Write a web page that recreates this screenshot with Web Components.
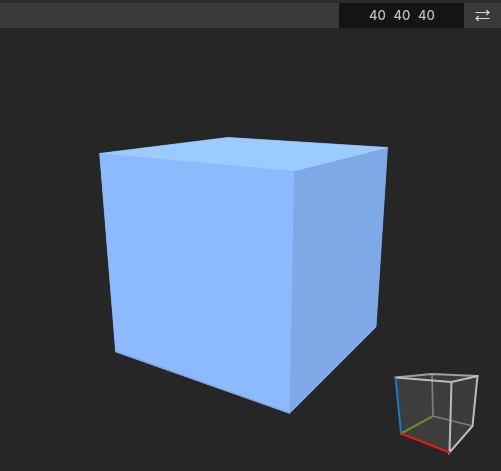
<!DOCTYPE html>
<html><head><meta charset="utf-8"><style>html,body{margin:0;padding:0;background:#262626;height:100%;overflow:hidden}</style></head>
<body>
<viewer-app>
  <view-toolbar slot="bar"><span>40</span><span>40</span><span>40</span></view-toolbar>
  <cube-scene></cube-scene>
  <axis-gizmo slot="overlay"></axis-gizmo>
</viewer-app>
<script>
function def(name, html){
  customElements.define(name, class extends HTMLElement{
    constructor(){super();this.attachShadow({mode:'open'}).innerHTML=html;}
  });
}
def('viewer-app',`<style>
:host{display:flex;flex-direction:column;width:501px;height:471px;background:#262626;position:relative;overflow:hidden;font-family:Inter,"Liberation Sans",sans-serif}
.top{height:3px;background:#2c2c2c;flex:none}
.canvas{flex:1;min-height:0;position:relative}
::slotted([slot=overlay]){position:absolute;left:0;top:0}
</style><div class="top"></div><slot name="bar"></slot><div class="canvas"><slot></slot></div><slot name="overlay"></slot>`);
def('view-toolbar',`<style>
:host{display:flex;height:25px;flex:none;background:#3a3a3a;align-items:stretch}
.fill{flex:1}
.dims{width:125px;background:#141414;display:flex;align-items:center;justify-content:center;box-sizing:border-box}
.vals{display:flex;gap:7.5px;color:#bdbdbd;font:500 13px/25px Inter,"Liberation Sans",sans-serif;will-change:transform}
.btn{width:37px;display:flex;align-items:center;justify-content:center}
svg{display:block}
</style><div class="fill"></div><div class="dims"><div class="vals"><slot></slot></div></div><div class="btn">
<svg width="15" height="11" viewBox="0 0 15 11" fill="none" stroke="#d4d4d4" stroke-width="1.2"><path d="M0.5 2.5H14M11.3 0L14 2.5L11.3 5"/><path d="M14.5 8.5H1M3.7 6L1 8.5L3.7 11"/></svg></div>`);
def('cube-scene',`<style>:host{display:block;position:absolute;left:0;top:-28px;width:501px;height:471px}svg{display:block}</style>
<svg width="501" height="471" viewBox="0 0 501 471">
<polygon points="99.5,153.5 228,137.5 387.5,147.5 376,327 289.5,413.5 115.5,352" fill="#8db9ff" stroke="#8db9ff" stroke-opacity=".25" stroke-width="1"/>
<polygon points="294,171 387.5,147.5 376,327 289.5,413.5" fill="#7fa9e6" stroke="#7fa9e6" stroke-width=".6"/>
<polygon points="99.5,153.5 228,137.5 387.5,147.5 294,171" fill="#9bcbff" stroke="#9bcbff" stroke-width=".6"/>
<polygon points="99.5,153.5 294,171 289.5,413.5 115.5,352" fill="#8db9ff"/>
<path d="M116 351.5L289.5 413" stroke="#7a9fdc" stroke-width="1.2" fill="none"/>
</svg>`);
def('axis-gizmo',`<style>:host{display:block;width:501px;height:471px;pointer-events:none}svg{display:block}</style>
<svg width="501" height="471" viewBox="0 0 501 471" fill="none" stroke-linecap="round">
<polygon points="395.5,377.5 451.5,382 449.5,452.5 401,433.5" fill="#3d3d3d"/>
<polygon points="451.5,382 477.5,376 472.5,426 449.5,452.5" fill="#3b3b3b"/>
<polygon points="395.5,377.5 431.5,374 477.5,376 451.5,382" fill="#3a3a3a"/>
<g stroke="#7c7c7c" stroke-width="1.8"><path d="M432 374L433 416M433 416L472.5 426"/></g>
<path d="M433 416L401 433.5" stroke="#6f8a2e" stroke-width="2"/>
<g stroke="#a0a0a0" stroke-width="2"><path d="M395.5 377.5L431.5 374L477.5 376"/></g>
<g stroke="#bcbcbc" stroke-width="2"><path d="M395.5 377.5L451.5 382L477.5 376L472.5 426L449.5 452.5L451.5 382"/></g>
<path d="M395.5 377.5L401 433.5" stroke="#1f78c8" stroke-width="2"/>
<path d="M401 433.5L449.5 452.5" stroke="#e8191c" stroke-width="2"/>
</svg>`);
</script>
</body></html>
